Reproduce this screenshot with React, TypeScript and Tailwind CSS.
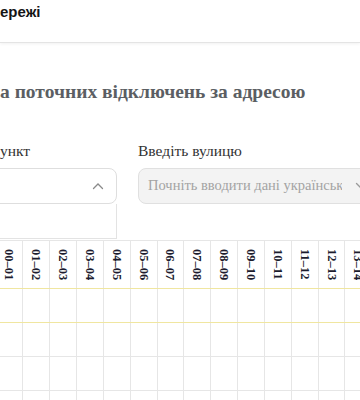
import React from "react";

const hours = Array.from({ length: 14 }, (_, i) => {
  const a = String(i).padStart(2, "0");
  const b = String(i + 1).padStart(2, "0");
  return `${a}–${b}`;
});

function Row({ yellow }: { yellow?: boolean }) {
  return (
    <div className={`flex h-[34px] border-b ${yellow ? "border-[#f0e6a0]" : "border-[#e6e6e6]"}`}>
      {hours.map((x) => (
        <div key={x} className="w-[26.85px] shrink-0 border-r border-[#e6e6e6]" />
      ))}
    </div>
  );
}

export default function App() {
  return (
    <div className="w-[360px] h-[400px] overflow-hidden bg-white relative">
      <div className="h-[43px] border-b border-[#e4e4e4] shadow-[0_1px_3px_rgba(0,0,0,0.06)] flex items-start pt-[3px]">
        <span className="font-['Liberation_Sans',Arial,sans-serif] text-[15px] font-bold text-[#151515] leading-[18px]">
          ережі
        </span>
      </div>
      <div className="font-['Liberation_Serif','Times_New_Roman',serif]">
        <h1 className="mt-[36px] text-[19.5px] font-bold text-[#5b5e63] leading-[26px] whitespace-nowrap">
          а поточних відключень за адресою
        </h1>
        <div className="mt-[36px] flex gap-[21px] whitespace-nowrap">
          <div className="w-[117px] shrink-0">
            <div className="text-[15.5px] text-[#333] leading-[20px]">ункт</div>
            <div className="mt-[7px] h-[36px] ml-[-10px] rounded-[8px] border border-[#dedede] flex items-center justify-end pr-[12px]">
              <svg width="12" height="8" viewBox="0 0 12 8" fill="none">
                <path d="M1.5 6.5L6 2L10.5 6.5" stroke="#8a8a8a" strokeWidth="1.3" strokeLinecap="round" />
              </svg>
            </div>
            <div className="h-[35px] ml-[-10px] border border-t-0 border-[#e3e3e3] bg-white" />
          </div>
          <div className="w-[240px] shrink-0">
            <div className="text-[15.5px] text-[#333] leading-[20px]">Введіть вулицю</div>
            <div className="mt-[7px] h-[36px] rounded-[8px] border border-[#e0e0e0] bg-[#f3f3f3] flex items-center pl-[9px]">
              <span className="text-[14.5px] text-[#a3a3a3] w-[194px] overflow-hidden">Почніть вводити дані українською</span>
              <svg className="ml-[13px]" width="12" height="8" viewBox="0 0 12 8" fill="none">
                <path d="M1.5 1.5L6 6L10.5 1.5" stroke="#9a9a9a" strokeWidth="1.3" strokeLinecap="round" />
              </svg>
            </div>
          </div>
        </div>
        <div className="mt-[1px] border-t border-[#e6e6e6] ml-[-3.5px]">
          <div className="flex h-[48px] border-b border-[#f0e6a0]">
            {hours.map((x) => (
              <div key={x} className="w-[26.85px] shrink-0 border-r border-[#e6e6e6] flex justify-center pt-[8px]">
                <span className="text-[12.5px] font-bold text-[#1c1c2e] leading-[14px] [writing-mode:vertical-rl]">
                  {x}
                </span>
              </div>
            ))}
          </div>
          <Row yellow />
          <Row />
          <Row />
          <Row />
        </div>
      </div>
    </div>
  );
}
